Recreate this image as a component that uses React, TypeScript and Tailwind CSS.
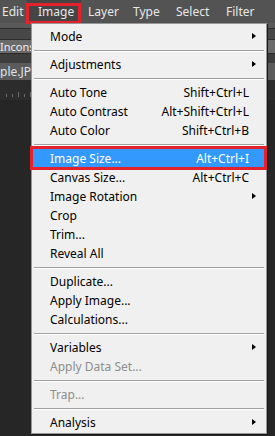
import React from 'react';

type Item =
  | { kind: 'sep' }
  | { kind: 'item'; label: string; shortcut?: string; sub?: boolean; disabled?: boolean; active?: boolean };

const items: Item[] = [
  { kind: 'item', label: 'Mode', sub: true },
  { kind: 'sep' },
  { kind: 'item', label: 'Adjustments', sub: true },
  { kind: 'sep' },
  { kind: 'item', label: 'Auto Tone', shortcut: 'Shift+Ctrl+L' },
  { kind: 'item', label: 'Auto Contrast', shortcut: 'Alt+Shift+Ctrl+L' },
  { kind: 'item', label: 'Auto Color', shortcut: 'Shift+Ctrl+B' },
  { kind: 'sep' },
  { kind: 'item', label: 'Image Size...', shortcut: 'Alt+Ctrl+I', active: true },
  { kind: 'item', label: 'Canvas Size...', shortcut: 'Alt+Ctrl+C' },
  { kind: 'item', label: 'Image Rotation', sub: true },
  { kind: 'item', label: 'Crop' },
  { kind: 'item', label: 'Trim...' },
  { kind: 'item', label: 'Reveal All' },
  { kind: 'sep' },
  { kind: 'item', label: 'Duplicate...' },
  { kind: 'item', label: 'Apply Image...' },
  { kind: 'item', label: 'Calculations...' },
  { kind: 'sep' },
  { kind: 'item', label: 'Variables', sub: true },
  { kind: 'item', label: 'Apply Data Set...', disabled: true },
  { kind: 'sep' },
  { kind: 'item', label: 'Trap...', disabled: true },
  { kind: 'sep' },
  { kind: 'item', label: 'Analysis', sub: true },
];

const topMenus = [
  { label: 'Edit', w: 'w-[27px]', pl: 'pl-[2px]' },
  { label: 'Image', w: 'w-[54px]', pl: 'pl-[11px]', active: true },
  { label: 'Layer', w: 'w-[46px]', pl: 'pl-[7px]' },
  { label: 'Type', w: 'w-[43px]', pl: 'pl-[6px]' },
  { label: 'Select', w: 'w-[50px]', pl: 'pl-[6px]' },
  { label: 'Filter', w: 'w-[50px]', pl: 'pl-[6px]' },
];

const Arrow = () => (
  <span className="absolute right-[10px] top-[6px] h-0 w-0 border-y-[3.5px] border-l-[4px] border-y-transparent border-l-black" />
);

const MenuRow: React.FC<{ item: Extract<Item, { kind: 'item' }> }> = ({ item }) => {
  if (item.active) {
    return (
      <div className="relative h-[19px]">
        <div className="mx-[1px] flex h-full items-center bg-[#3399ff] pl-[17px] pr-[16px] text-white">
          <span>{item.label}</span>
          <span className="ml-auto">{item.shortcut}</span>
        </div>
        {/* red annotation box */}
        <div className="pointer-events-none absolute -left-[2px] -right-[1px] -top-[3px] -bottom-[2px] border-[3px] border-[#e5222b]" />
      </div>
    );
  }
  return (
    <div
      className={`relative flex h-[19px] items-center pl-[18px] pr-[17px] ${
        item.disabled ? 'text-[#8e8e8e]' : 'text-black'
      }`}
    >
      <span>{item.label}</span>
      {item.shortcut && <span className="ml-auto">{item.shortcut}</span>}
      {item.sub && <Arrow />}
    </div>
  );
};

const App: React.FC = () => {
  return (
    <div
      className="relative h-[436px] w-[275px] overflow-hidden bg-[#262626] text-[12px] leading-none"
      style={{ fontFamily: '"Noto Sans", "Open Sans", sans-serif' }}
    >
      {/* menu bar */}
      <div className="flex h-[23px] items-center bg-[#535353] text-[#e8e8e8]">
        {topMenus.map((m) => (
          <div
            key={m.label}
            className={`relative flex h-full shrink-0 items-center ${m.w} ${m.pl} ${m.active ? 'bg-[#454545]' : ''}`}
          >
            {m.label}
            {m.active && (
              <div className="pointer-events-none absolute -left-[1px] right-0 top-[3px] -bottom-[1px] border-[3px] border-[#e5222b]" />
            )}
          </div>
        ))}
      </div>

      {/* document panels behind the menu */}
      <div className="flex flex-col">
        <div className="h-[5px] bg-[#5a5a5a]" />
        <div className="h-[1px] bg-[#2e2e2e]" />
        <div className="h-[10px] bg-[#474747]" />
        <div className="h-[1px] bg-[#2e2e2e]" />
        <div className="flex h-[13px] items-center bg-[#6a6a6a] text-[11px] text-[#f0f0f0]">
          <span className="w-[31px] overflow-hidden whitespace-nowrap">Inconsistent</span>
        </div>
        <div className="h-[1px] bg-[#2a2a2a]" />
        <div className="h-[9px] bg-[#3d3d3d]" />
        <div className="flex h-[17px] items-center bg-[#5b5b5b] text-[12px] text-[#dfe6ee]">
          <span className="w-[31px] overflow-hidden whitespace-nowrap">ple.JPG</span>
        </div>
        <div className="relative h-[20px] bg-[#2c2c2c]">
          <div className="absolute bottom-[3px] left-[6px] flex items-end gap-[5px]">
            {[3, 3, 5, 3, 5, 3].map((h, i) => (
              <span key={i} className="w-[1px] bg-[#6a6a6a]" style={{ height: h }} />
            ))}
          </div>
        </div>
      </div>

      {/* dropdown menu */}
      <div className="absolute left-[31px] top-[23px] w-[236px] border border-[#979797] bg-[#f0f0f0] pb-[1px] pt-[3px] shadow-[1px_1px_0_#1a1a1a]">
        {items.map((it, i) =>
          it.kind === 'sep' ? (
            <div key={i} className="flex h-[9px] items-center px-[2px]">
              <div className="h-[2px] w-full border-t border-b border-t-[#a0a0a0] border-b-white" />
            </div>
          ) : (
            <MenuRow key={i} item={it} />
          )
        )}
      </div>
    </div>
  );
};

export default App;
